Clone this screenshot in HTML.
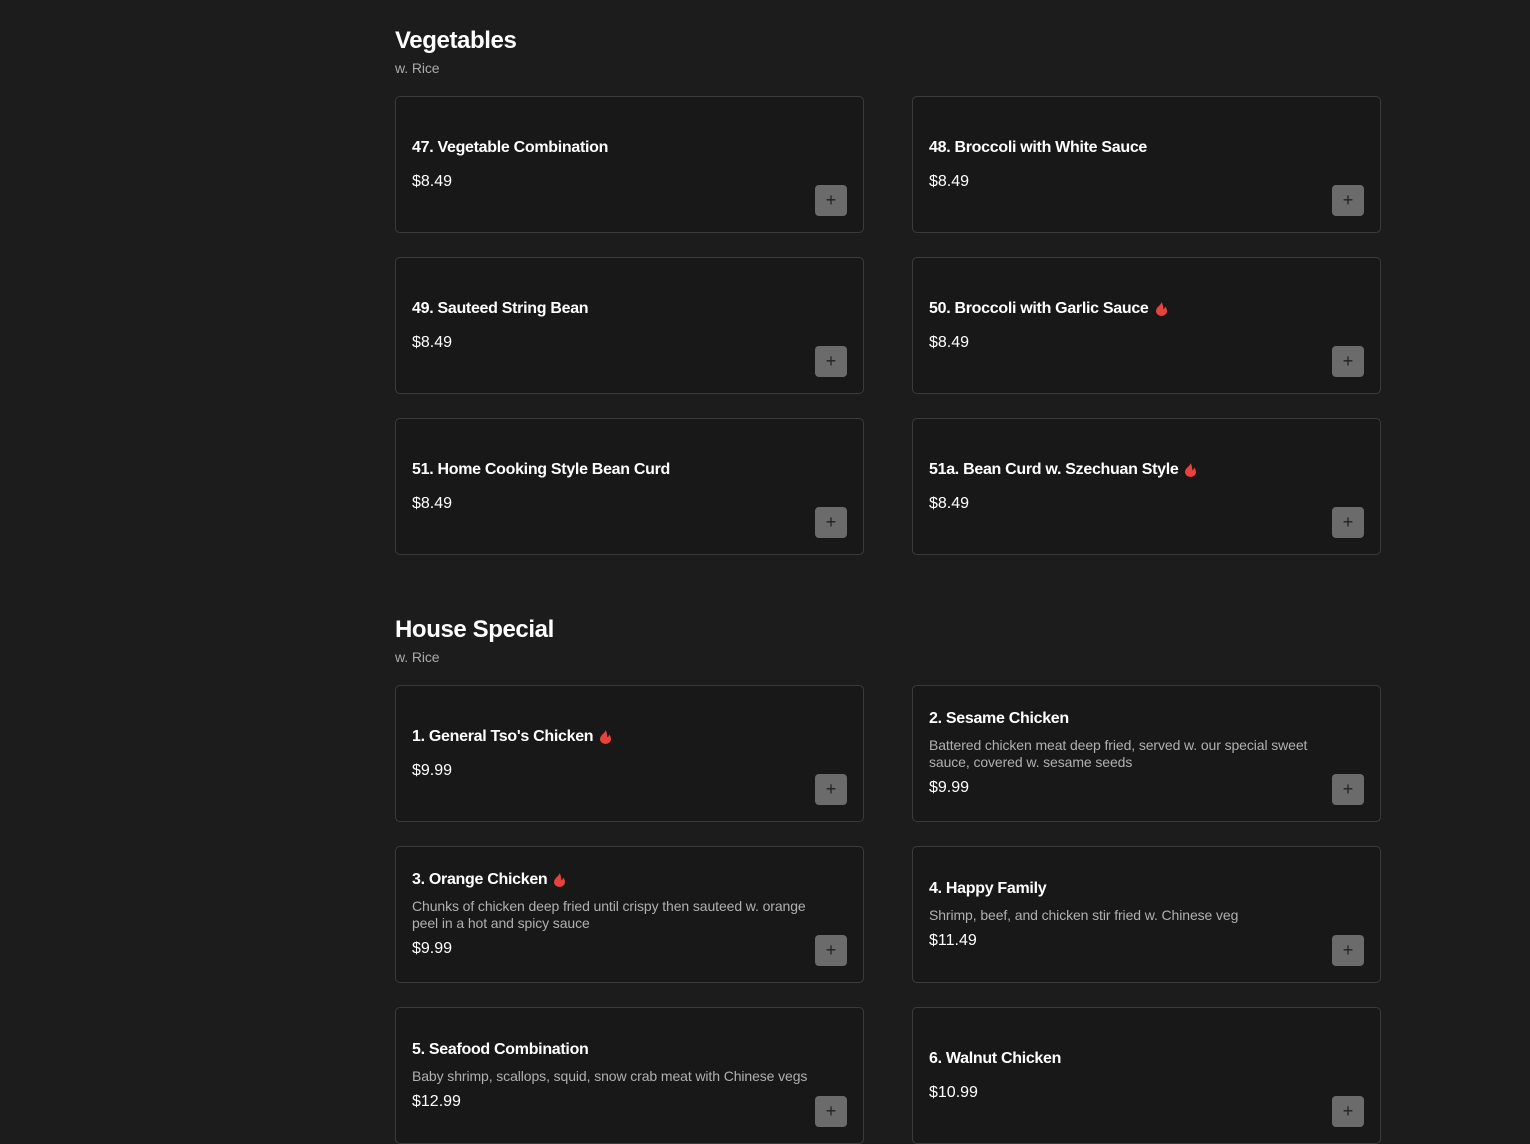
<!DOCTYPE html>
<html><head><meta charset="utf-8"><style>
*{box-sizing:border-box;margin:0;padding:0}
html,body{width:1530px;height:1087px;overflow:hidden;background:#1c1c1c;font-family:"Liberation Sans",sans-serif;color:#fff}
.sec{position:absolute;left:395px;width:986px}
h2{font-size:24px;font-weight:bold;line-height:30px;letter-spacing:-0.4px}
.sub{font-size:14px;color:#aaa;line-height:18px;margin-top:3px;letter-spacing:-0.1px}
.grid{position:absolute;left:0;display:grid;grid-template-columns:469px 469px;column-gap:48px;row-gap:24px}
.card{position:relative;height:137px;background:#181818;border:1px solid #3b3b3b;border-radius:5px;padding:0 16px;display:flex;flex-direction:column;justify-content:center}
.t{font-size:16px;font-weight:bold;line-height:22px;margin-bottom:12px;display:flex;align-items:center;letter-spacing:-0.3px}
.t svg{margin-left:6px}
.d{font-size:14px;color:#b0b0b0;line-height:17px;margin:-5px 0 6px;padding-right:30px;letter-spacing:-0.1px}
.p{font-size:16px;line-height:22px}
.b{position:absolute;right:16px;bottom:16px;width:32px;height:31px;background:#6b6b6b;border-radius:4px;color:#222;font-size:18px;line-height:31px;text-align:center}
</style></head><body>
<div class="sec" style="top:26px">
<h2>Vegetables</h2><div class="sub">w. Rice</div>
<div class="grid" style="top:70px">
<div class="card"><div class="t">47. Vegetable Combination</div><div class="p">$8.49</div><div class="b">+</div></div>
<div class="card"><div class="t">48. Broccoli with White Sauce</div><div class="p">$8.49</div><div class="b">+</div></div>
<div class="card"><div class="t">49. Sauteed String Bean</div><div class="p">$8.49</div><div class="b">+</div></div>
<div class="card"><div class="t">50. Broccoli with Garlic Sauce <svg width="13" height="14" viewBox="0 0 13 14"><path d="M6.5 0C6.5 3 1 5 1 9a5.5 5 0 0 0 11 0c0-2-1-3.5-2-4.5 0 1.5-.7 2.5-1.7 2.8C8.3 5 8 2.3 6.5 0z" fill="#e8423f"/></svg></div><div class="p">$8.49</div><div class="b">+</div></div>
<div class="card"><div class="t">51. Home Cooking Style Bean Curd</div><div class="p">$8.49</div><div class="b">+</div></div>
<div class="card"><div class="t">51a. Bean Curd w. Szechuan Style <svg width="13" height="14" viewBox="0 0 13 14"><path d="M6.5 0C6.5 3 1 5 1 9a5.5 5 0 0 0 11 0c0-2-1-3.5-2-4.5 0 1.5-.7 2.5-1.7 2.8C8.3 5 8 2.3 6.5 0z" fill="#e8423f"/></svg></div><div class="p">$8.49</div><div class="b">+</div></div>
</div></div>
<div class="sec" style="top:615px">
<h2>House Special</h2><div class="sub">w. Rice</div>
<div class="grid" style="top:70px">
<div class="card"><div class="t">1. General Tso's Chicken <svg width="13" height="14" viewBox="0 0 13 14"><path d="M6.5 0C6.5 3 1 5 1 9a5.5 5 0 0 0 11 0c0-2-1-3.5-2-4.5 0 1.5-.7 2.5-1.7 2.8C8.3 5 8 2.3 6.5 0z" fill="#e8423f"/></svg></div><div class="p">$9.99</div><div class="b">+</div></div>
<div class="card"><div class="t">2. Sesame Chicken</div><div class="d">Battered chicken meat deep fried, served w. our special sweet sauce, covered w. sesame seeds</div><div class="p">$9.99</div><div class="b">+</div></div>
<div class="card"><div class="t">3. Orange Chicken <svg width="13" height="14" viewBox="0 0 13 14"><path d="M6.5 0C6.5 3 1 5 1 9a5.5 5 0 0 0 11 0c0-2-1-3.5-2-4.5 0 1.5-.7 2.5-1.7 2.8C8.3 5 8 2.3 6.5 0z" fill="#e8423f"/></svg></div><div class="d">Chunks of chicken deep fried until crispy then sauteed w. orange peel in a hot and spicy sauce</div><div class="p">$9.99</div><div class="b">+</div></div>
<div class="card"><div class="t">4. Happy Family</div><div class="d">Shrimp, beef, and chicken stir fried w. Chinese veg</div><div class="p">$11.49</div><div class="b">+</div></div>
<div class="card"><div class="t">5. Seafood Combination</div><div class="d">Baby shrimp, scallops, squid, snow crab meat with Chinese vegs</div><div class="p">$12.99</div><div class="b">+</div></div>
<div class="card"><div class="t">6. Walnut Chicken</div><div class="p">$10.99</div><div class="b">+</div></div>
</div></div>
</body></html>
